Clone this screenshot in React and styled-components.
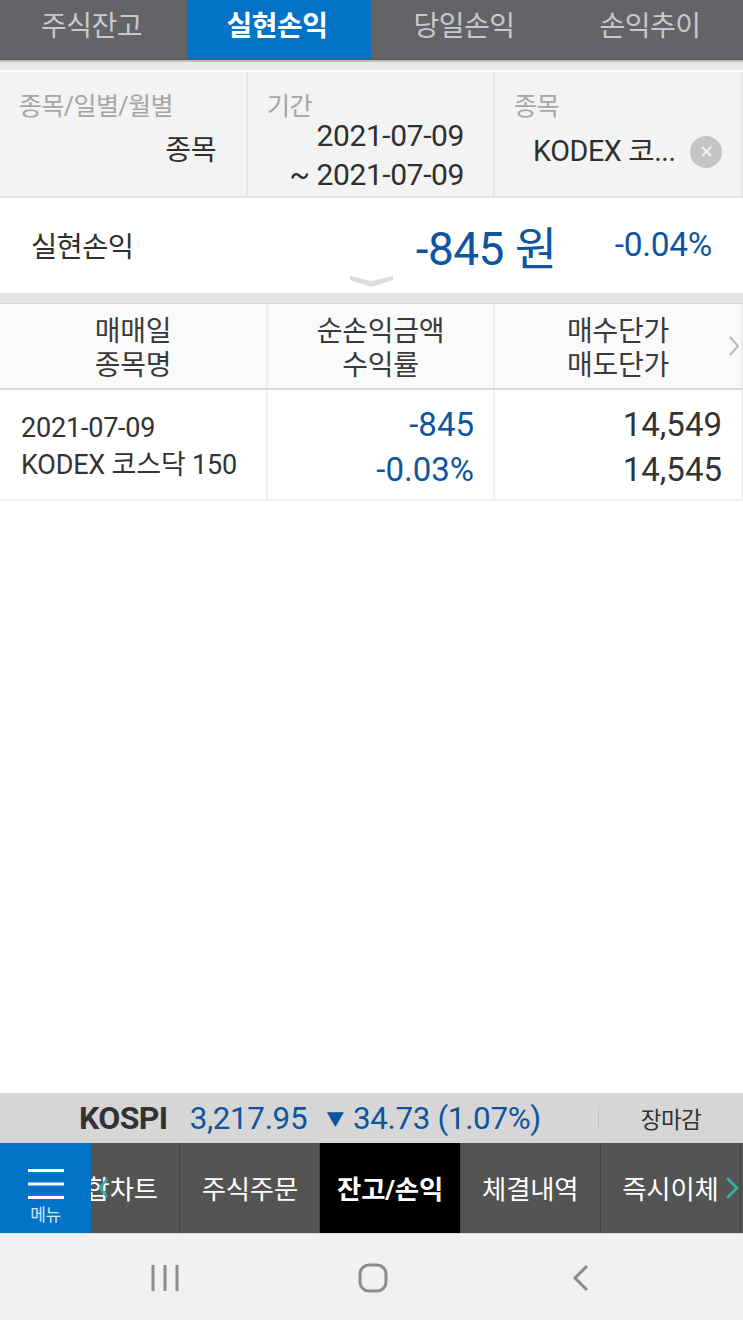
import React from "react";
import styled, { createGlobalStyle } from "styled-components";

const GlobalStyle = createGlobalStyle`
  html, body {
    margin: 0;
    padding: 0;
    background: #fff;
  }
  body {
    font-family: Roboto, "Noto Sans CJK KR", sans-serif;
  }
`;

const Page = styled.div`
  width: 743px;
  height: 1320px;
  display: flex;
  flex-direction: column;
  overflow: hidden;
`;

const Tabs = styled.div`
  height: 60px;
  flex: none;
  display: grid;
  grid-template-columns: 183px 188px 186px 186px;
  background: #636368;
  border-bottom: 1px solid #58585c;
  box-sizing: border-box;
`;

const Tab = styled.div`
  display: flex;
  align-items: center;
  justify-content: center;
  padding: 0 ${(p) => (p.$active ? 4 : 0)}px 12px 0;
  margin-left: ${(p) => (p.$active ? 4 : 0)}px;
  font-size: 28px;
  letter-spacing: -0.5px;
  font-weight: ${(p) => (p.$active ? 700 : 400)};
  color: ${(p) => (p.$active ? "#fff" : "#c9c9cb")};
  background: ${(p) => (p.$active ? "#0273c6" : "transparent")};
`;

const TopGap = styled.div`
  height: 12px;
  flex: none;
  box-sizing: border-box;
  background: #e9e9e9;
  border-bottom: 2px solid #fff;
  border-top: 2px solid #bdbdbd;
`;

const Filters = styled.div`
  height: 126px;
  flex: none;
  display: grid;
  grid-template-columns: 248px 247px 1fr;
  background: #f3f3f3;
  border-bottom: 2px solid #e2e2e2;
  box-sizing: border-box;
`;

const FilterCell = styled.div`
  position: relative;
  border-right: 2px solid #e6e6e6;
  padding: 21px 0 0 19px;
  display: flex;
  flex-direction: column;
`;

const FilterLabel = styled.div`
  font-size: 25px;
  line-height: 28px;
  letter-spacing: -0.6px;
  color: #a6a6a6;
`;

const FilterValue = styled.div`
  font-size: ${(p) => p.$size}px;
  line-height: 39px;
  color: #2f2f2f;
  text-align: right;
  letter-spacing: -0.4px;
  padding-right: ${(p) => p.$right}px;
  margin-top: ${(p) => p.$top}px;
  white-space: nowrap;
`;

const StockValue = styled.div`
  display: flex;
  align-items: center;
  justify-content: space-between;
  margin: 11px 19px 0 19px;
  font-size: 28.7px;
  line-height: 39px;
  letter-spacing: -0.4px;
  color: #2f2f2f;
  white-space: nowrap;
`;

const ClearBtn = styled.div`
  width: 32px;
  height: 32px;
  border-radius: 50%;
  background: #c4c4c4;
  display: flex;
  align-items: center;
  justify-content: center;
`;

const Summary = styled.div`
  position: relative;
  height: 95px;
  flex: none;
  display: flex;
  align-items: center;
  padding: 0 31px 2px;
  box-sizing: border-box;
  background: #fff;
`;

const SummaryLabel = styled.div`
  font-size: 28.5px;
  letter-spacing: -0.6px;
  color: #2f2f2f;
  margin-right: auto;
`;

const SummaryAmount = styled.div`
  font-size: 46px;
  font-weight: 400;
  color: #0e559f;
  letter-spacing: -0.5px;
  margin-right: 58px;
`;

const SummaryRate = styled.div`
  font-size: 33.5px;
  color: #0e559f;
  letter-spacing: -0.3px;
`;

const Fold = styled.svg`
  position: absolute;
  left: 350px;
  bottom: 6px;
`;

const MidGap = styled.div`
  height: 11px;
  flex: none;
  background: #e6e6e6;
  border-bottom: 1px solid #d9d9d9;
  box-sizing: border-box;
`;

const Row = styled.div`
  display: grid;
  grid-template-columns: 268px 227px 1fr;
  flex: none;
  box-sizing: border-box;
`;

const HeadRow = styled(Row)`
  position: relative;
  height: 86px;
  background: #fafafa;
  border-bottom: 2px solid #d8d8d8;
`;

const DataRow = styled(Row)`
  height: 111px;
  background: #fff;
  border-bottom: 2px solid #f0f0f0;
`;

const HeadCell = styled.div`
  border-right: 2px solid #eeeeee;
  text-align: center;
  font-size: 28px;
  line-height: 34px;
  color: #3a3a3a;
  letter-spacing: -0.3px;
  padding-top: 11px;
`;

const DataCell = styled.div`
  border-right: 2px solid #f0f0f0;
  display: flex;
  flex-direction: column;
  justify-content: center;
  align-items: ${(p) => (p.$left ? "flex-start" : "flex-end")};
  padding: ${(p) => (p.$left ? "5px 0 0 21px" : "4px 19px 0 0")};
`;

const NameLine = styled.div`
  font-size: 27px;
  line-height: 37px;
  color: #333;
  letter-spacing: -0.2px;
  white-space: nowrap;
`;

const NumLine = styled.div`
  font-size: 33px;
  line-height: 45px;
  color: ${(p) => (p.$blue ? "#0e559f" : "#333")};
  white-space: nowrap;
`;

const HeadArrow = styled.svg`
  position: absolute;
  right: 3px;
  top: 31px;
`;

const Spacer = styled.div`
  flex: 1;
  background: #fff;
`;

const Ticker = styled.div`
  height: 50px;
  flex: none;
  display: flex;
  align-items: center;
  background: #d6d6d6;
  padding-left: 79px;
  box-sizing: border-box;
`;

const TickerName = styled.div`
  font-size: 32px;
  font-weight: 700;
  color: #333;
  letter-spacing: -0.6px;
  margin-right: 22px;
`;

const TickerValue = styled.div`
  font-size: 31.3px;
  color: #0e559f;
  letter-spacing: -0.3px;
  white-space: nowrap;
`;

const DownMark = styled.span`
  font-size: 18px;
  margin: 0 9px 0 19px;
  position: relative;
  top: -3px;
`;

const MarketState = styled.div`
  margin-left: auto;
  width: 144px;
  height: 24px;
  border-left: 1px solid #c4c4c4;
  display: flex;
  align-items: center;
  justify-content: center;
  font-size: 22.5px;
  color: #333;
  letter-spacing: -0.5px;
`;

const BottomNav = styled.div`
  position: relative;
  height: 90px;
  flex: none;
  display: flex;
  background: #545454;
`;

const MenuBtn = styled.div`
  width: 91px;
  flex: none;
  background: #0273c6;
  display: flex;
  flex-direction: column;
  align-items: center;
  padding-top: 26px;
  box-sizing: border-box;
  color: #cfe6f7;
  font-size: 17px;
  line-height: 20px;
  letter-spacing: -0.5px;
  z-index: 1;
`;

const MenuBars = styled.svg`
  display: block;
  margin-bottom: 6px;
`;

const NavScroller = styled.div`
  flex: 1;
  display: flex;
  justify-content: flex-end;
  overflow: hidden;
  padding-right: 2px;
`;

const NavItem = styled.div`
  flex: none;
  width: 140.2px;
  display: flex;
  align-items: center;
  justify-content: center;
  font-size: 26.4px;
  padding-bottom: 2px;
  letter-spacing: -0.2px;
  box-sizing: border-box;
  white-space: nowrap;
  color: #fff;
  font-weight: ${(p) => (p.$active ? 700 : 400)};
  background: ${(p) => (p.$active ? "#000" : "transparent")};
  border-right: 1px solid #444;
`;

const NavChevron = styled.svg`
  position: absolute;
  top: 34px;
  left: ${(p) => p.$x}px;
  z-index: 2;
`;

const SystemBar = styled.div`
  height: 87px;
  flex: none;
  display: grid;
  grid-template-columns: repeat(3, 208px);
  padding: 2px 0 0 61px;
  background: #f1f1f1;
  border-top: 1px solid #e0e0e0;
  box-sizing: border-box;
`;

const SysIcon = styled.div`
  display: flex;
  align-items: center;
  justify-content: center;
`;

export default function App() {
  return (
    <>
      <GlobalStyle />
      <Page>
        <Tabs>
          <Tab>주식잔고</Tab>
          <Tab $active>실현손익</Tab>
          <Tab>당일손익</Tab>
          <Tab>손익추이</Tab>
        </Tabs>
        <TopGap />
        <Filters>
          <FilterCell>
            <FilterLabel>종목/일별/월별</FilterLabel>
            <FilterValue $size={28} $right={30} $top={10}>종목</FilterValue>
          </FilterCell>
          <FilterCell>
            <FilterLabel>기간</FilterLabel>
            <FilterValue $size={30} $right={29} $top={-5}>2021-07-09</FilterValue>
            <FilterValue $size={30} $right={29} $top={0}>~ 2021-07-09</FilterValue>
          </FilterCell>
          <FilterCell>
            <FilterLabel>종목</FilterLabel>
            <StockValue>
              KODEX 코...
              <ClearBtn>
                <svg width="13" height="13" viewBox="0 0 13 13">
                  <path d="M2 2 L11 11 M11 2 L2 11" stroke="#f3f3f3" strokeWidth="2" />
                </svg>
              </ClearBtn>
            </StockValue>
          </FilterCell>
        </Filters>
        <Summary>
          <SummaryLabel>실현손익</SummaryLabel>
          <SummaryAmount>-845 원</SummaryAmount>
          <SummaryRate>-0.04%</SummaryRate>
          <Fold width="43" height="13" viewBox="0 0 43 13">
            <path d="M0 2 L21.5 7 L43 2 L43 6 L21.5 13 L0 6 Z" fill="#dcdcdc" />
          </Fold>
        </Summary>
        <MidGap />
        <HeadRow>
          <HeadCell>매매일<br />종목명</HeadCell>
          <HeadCell>순손익금액<br />수익률</HeadCell>
          <HeadCell>매수단가<br />매도단가</HeadCell>
          <HeadArrow width="12" height="22" viewBox="0 0 12 22">
            <path d="M2 2 L10 11 L2 20" fill="none" stroke="#b9b9b9" strokeWidth="2" />
          </HeadArrow>
        </HeadRow>
        <DataRow>
          <DataCell $left>
            <NameLine>2021-07-09</NameLine>
            <NameLine>KODEX 코스닥 150</NameLine>
          </DataCell>
          <DataCell>
            <NumLine $blue>-845</NumLine>
            <NumLine $blue>-0.03%</NumLine>
          </DataCell>
          <DataCell>
            <NumLine>14,549</NumLine>
            <NumLine>14,545</NumLine>
          </DataCell>
        </DataRow>
        <Spacer />
        <Ticker>
          <TickerName>KOSPI</TickerName>
          <TickerValue>
            3,217.95<DownMark>▼</DownMark>34.73 (1.07%)
          </TickerValue>
          <MarketState>장마감</MarketState>
        </Ticker>
        <BottomNav>
          <MenuBtn>
            <MenuBars width="36" height="30" viewBox="0 0 36 30">
              <path d="M0 1.5 H36 M0 15 H36 M0 28.5 H36" stroke="#fff" strokeWidth="3" />
            </MenuBars>
            메뉴
          </MenuBtn>
          <NavScroller>
            <NavItem>통합차트</NavItem>
            <NavItem>주식주문</NavItem>
            <NavItem $active>잔고/손익</NavItem>
            <NavItem>체결내역</NavItem>
            <NavItem>즉시이체</NavItem>
          </NavScroller>
          <NavChevron $x={97} width="12" height="22" viewBox="0 0 12 22">
            <path d="M10 2 L3 11 L10 20" fill="none" stroke="#2fb5a6" strokeWidth="2.5" />
          </NavChevron>
          <NavChevron $x={725} width="14" height="22" viewBox="0 0 14 22">
            <path d="M2 1 L12 11 L2 21" fill="none" stroke="#2fb5a6" strokeWidth="2.5" />
          </NavChevron>
        </BottomNav>
        <SystemBar>
          <SysIcon>
            <svg width="28" height="28" viewBox="0 0 28 28">
              <path d="M2 1 V27 M14 1 V27 M26 1 V27" stroke="#8c8c8c" strokeWidth="3" />
            </svg>
          </SysIcon>
          <SysIcon>
            <svg width="30" height="30" viewBox="0 0 30 30">
              <rect x="2" y="2" width="26" height="26" rx="9" fill="none" stroke="#8c8c8c" strokeWidth="3" />
            </svg>
          </SysIcon>
          <SysIcon>
            <svg width="18" height="28" viewBox="0 0 18 28">
              <path d="M15 2 L3 14 L15 26" fill="none" stroke="#8c8c8c" strokeWidth="3" />
            </svg>
          </SysIcon>
        </SystemBar>
      </Page>
    </>
  );
}
